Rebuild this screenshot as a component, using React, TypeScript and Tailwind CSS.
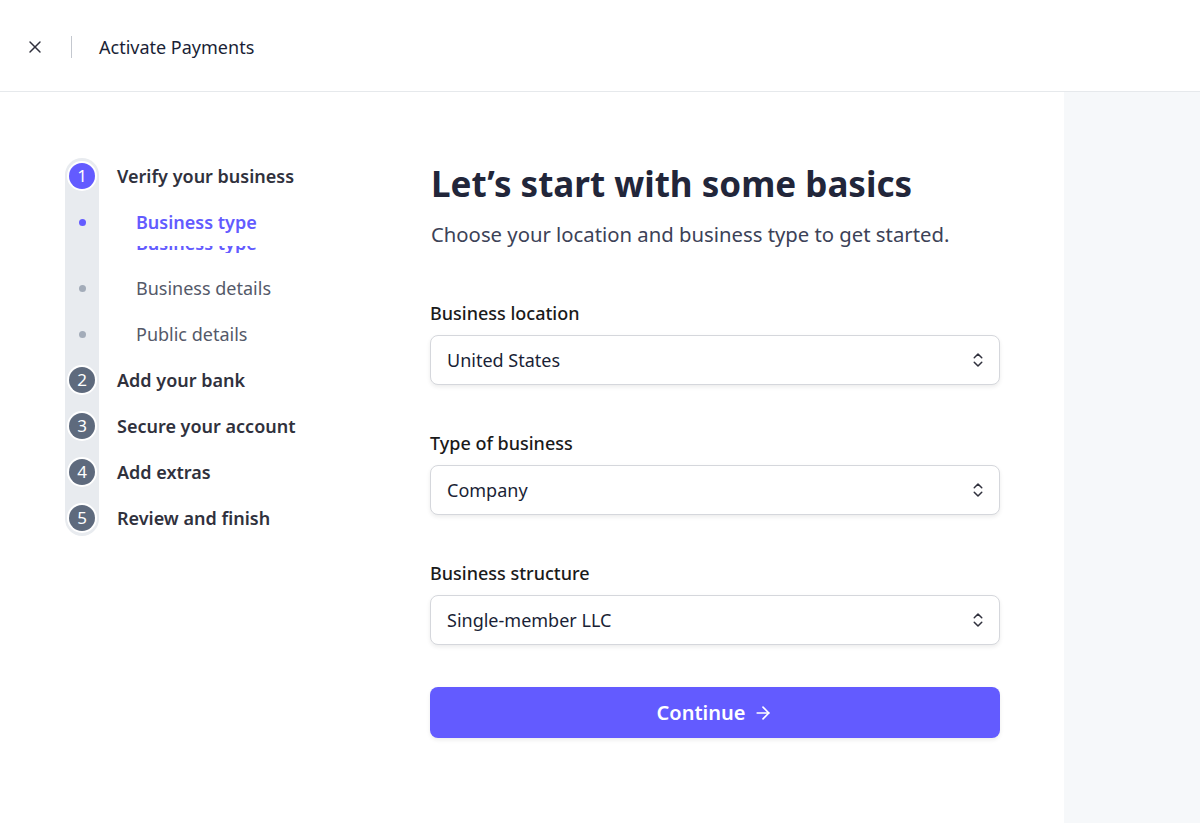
import React from 'react';
import { X, ChevronsUpDown, ArrowRight } from 'lucide-react';

const font = { fontFamily: '"Noto Sans", "Open Sans", sans-serif' };

interface Step {
  n: number;
  label: string;
}

const steps: Step[] = [
  { n: 2, label: 'Add your bank' },
  { n: 3, label: 'Secure your account' },
  { n: 4, label: 'Add extras' },
  { n: 5, label: 'Review and finish' },
];

function Select({ label, value }: { label: string; value: string }) {
  return (
    <div className="flex flex-col">
      <label className="text-[18px] font-medium text-[#1a1a1a] mb-[10px] leading-[24px]">{label}</label>
      <div className="h-[50px] rounded-[8px] border border-[#d5d7dc] bg-white shadow-[0_2px_4px_rgba(0,0,0,0.08)] flex items-center justify-between pl-[16px] pr-[12px]">
        <span className="text-[18px] text-[#1a1f36]">{value}</span>
        <ChevronsUpDown className="w-[18px] h-[18px] text-[#30313d]" strokeWidth={2} />
      </div>
    </div>
  );
}

function Stepper() {
  return (
    <div className="relative w-[300px] self-start mt-[-2px]">
      <div className="absolute left-[65px] top-[0px] bottom-[0px] w-[34px] rounded-full bg-[#e8ebef]" />
      <div className="relative flex flex-col">
        <div className="flex items-center h-[36px]">
          <div className="w-[34px] ml-[65px] flex justify-center">
            <div className="w-[26px] h-[26px] rounded-full bg-[#635bff] text-white text-[17px] flex items-center justify-center ring-2 ring-white">1</div>
          </div>
          <span className="ml-[18px] text-[18px] font-semibold text-[#30313d]">Verify your business</span>
        </div>
        <div className="flex items-center h-[36px] mt-[10px]">
          <div className="w-[34px] ml-[65px] flex justify-center">
            <div className="w-[7px] h-[7px] rounded-full bg-[#635bff]" />
          </div>
          <span className="ml-[37px] text-[18px] font-semibold text-[#635bff]">Business type</span>
        </div>
        <div className="h-[7px] overflow-hidden ml-[136px] mt-[6px]">
          <div className="text-[18px] font-semibold text-[#635bff] leading-[24px] -translate-y-[15px]">Business type</div>
        </div>
        <div className="flex items-center h-[36px] mt-[17px]">
          <div className="w-[34px] ml-[65px] flex justify-center">
            <div className="w-[7px] h-[7px] rounded-full bg-[#a3acb9]" />
          </div>
          <span className="ml-[37px] text-[18px] text-[#545969]">Business details</span>
        </div>
        <div className="flex items-center h-[36px] mt-[10px]">
          <div className="w-[34px] ml-[65px] flex justify-center">
            <div className="w-[7px] h-[7px] rounded-full bg-[#a3acb9]" />
          </div>
          <span className="ml-[37px] text-[18px] text-[#545969]">Public details</span>
        </div>
        {steps.map((s) => (
          <div key={s.n} className="flex items-center h-[36px] mt-[10px]">
            <div className="w-[34px] ml-[65px] flex justify-center">
              <div className="w-[26px] h-[26px] rounded-full bg-[#5e6a7d] text-white text-[17px] flex items-center justify-center ring-2 ring-white">{s.n}</div>
            </div>
            <span className="ml-[18px] text-[18px] font-semibold text-[#30313d]">{s.label}</span>
          </div>
        ))}
      </div>
    </div>
  );
}

export default function App() {
  return (
    <div className="w-[1200px] h-[823px] bg-white flex flex-col overflow-hidden" style={font}>
      <header className="h-[92px] border-b border-[#e6e9ec] flex items-center shrink-0 pt-[3px]">
        <X className="w-[20px] h-[20px] ml-[25px] text-[#30313d]" strokeWidth={1.75} />
        <div className="w-px h-[22px] bg-[#c4c8cf] ml-[26px]" />
        <span className="ml-[27px] text-[18px] text-[#1a1f36]">Activate Payments</span>
      </header>
      <div className="flex flex-1">
        <div className="flex-1 flex pt-[68px]">
          <Stepper />
          <main className="ml-[130px] w-[570px] flex flex-col">
            <h1 className="text-[35px] font-bold text-[#22263a] leading-[48px] mt-[0px] ml-[1px]">Let’s start with some basics</h1>
            <p className="text-[20.3px] text-[#3c4257] mt-[12px] leading-[28px] ml-[1px]">Choose your location and business type to get started.</p>
            <div className="flex flex-col gap-[46px] mt-[53px]">
              <Select label="Business location" value="United States" />
              <Select label="Type of business" value="Company" />
              <Select label="Business structure" value="Single-member LLC" />
            </div>
            <button className="mt-[42px] h-[51px] rounded-[8px] bg-[#635bff] text-white text-[20px] font-semibold flex items-center justify-center gap-[8px] shadow-[0_2px_4px_rgba(0,0,0,0.08)]">
              Continue
              <ArrowRight className="w-[20px] h-[20px]" strokeWidth={2} />
            </button>
          </main>
        </div>
        <aside className="w-[136px] bg-[#f6f8fa]" />
      </div>
    </div>
  );
}
